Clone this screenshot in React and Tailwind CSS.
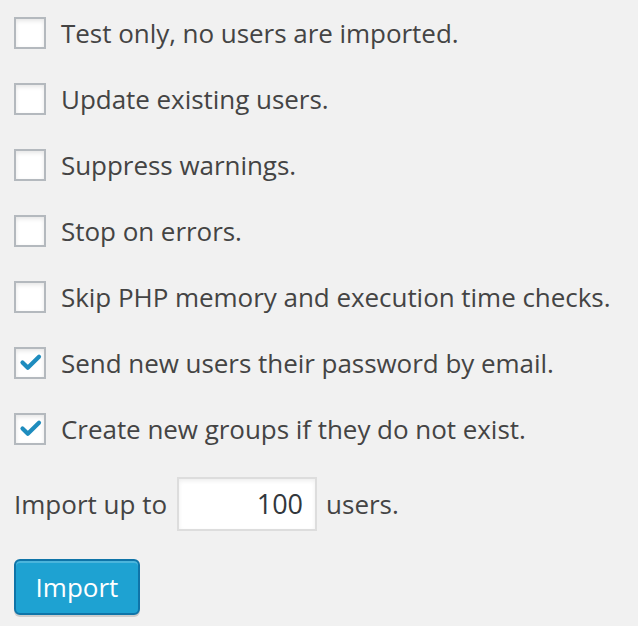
const options = [
  { label: 'Test only, no users are imported.', checked: false },
  { label: 'Update existing users.', checked: false },
  { label: 'Suppress warnings.', checked: false },
  { label: 'Stop on errors.', checked: false },
  { label: 'Skip PHP memory and execution time checks.', checked: false },
  { label: 'Send new users their password by email.', checked: true },
  { label: 'Create new groups if they do not exist.', checked: true },
];

function Box({ checked }) {
  return (
    <span className="w-[32px] h-[32px] shrink-0 bg-white border-2 border-[#b4b9be] shadow-[inset_0_2px_4px_rgba(0,0,0,0.1)] flex items-center justify-center">
      {checked && (
        <svg viewBox="0 0 28 28" className="w-[28px] h-[28px]">
          <path d="M6.5 13.5 L11.8 18.8 L23 7.8" fill="none" stroke="#1e8cbe" strokeWidth="4.2" strokeLinecap="round" strokeLinejoin="round" />
        </svg>
      )}
    </span>
  );
}

export default function App() {
  return (
    <div className="min-h-screen w-full bg-[#f1f1f1] text-[#444] font-['Open_Sans',sans-serif] text-[26px] px-[14px] pt-[17px]">
      <div className="flex flex-col gap-[34px]">
        {options.map((o) => (
          <label key={o.label} className="flex items-center gap-[15px] h-[32px] whitespace-nowrap">
            <Box checked={o.checked} />
            <span className="tracking-[-0.04px]">{o.label}</span>
          </label>
        ))}
      </div>
      <div className="flex items-center mt-[32px] h-[54px]">
        <span>Import up to</span>
        <div className="ml-[10px] w-[140px] h-[54px] bg-white border-2 border-[#dddddd] shadow-[inset_0_2px_4px_rgba(0,0,0,0.07)] flex items-center justify-end pr-[12px] text-[27px] text-[#32373c]">
          100
        </div>
        <span className="ml-[9px]">users.</span>
      </div>
      <button className="mt-[28px] w-[126px] h-[56px] rounded-[6px] bg-[#1ea2d2] border-2 border-[#0f74a8] text-white text-[26px] shadow-[inset_0_2px_0_rgba(120,200,230,0.5),0_2px_0_rgba(0,0,0,0.15)]">
        Import
      </button>
    </div>
  );
}
